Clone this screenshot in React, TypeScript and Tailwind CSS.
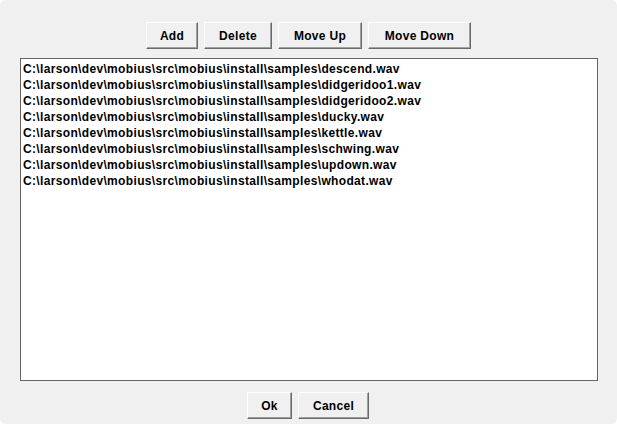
import React from "react";

const files = [
  "descend.wav",
  "didgeridoo1.wav",
  "didgeridoo2.wav",
  "ducky.wav",
  "kettle.wav",
  "schwing.wav",
  "updown.wav",
  "whodat.wav",
];

function Btn({ label, w }: { label: string; w: string }) {
  return (
    <button
      className={`${w} h-[27px] bg-[#f0f0f0] border border-t-white border-l-white border-r-[#696969] border-b-[#696969] shadow-[inset_-1px_-1px_0_#a0a0a0] text-[12px] tracking-[0.3px] font-bold text-black flex items-center justify-center leading-none shrink-0`}
    >
      {label}
    </button>
  );
}

export default function App() {
  return (
    <div className="w-[617px] h-[424px] bg-white">
      <div
        className="w-full h-full bg-[#f0f0f0] rounded-[6px] flex flex-col"
        style={{ fontFamily: '"Liberation Sans", Arial, sans-serif' }}
      >
        <div className="flex gap-[6px] pt-[22px] pl-[146px]">
          <Btn label="Add" w="w-[52px]" />
          <Btn label="Delete" w="w-[68px]" />
          <Btn label="Move Up" w="w-[84px]" />
          <Btn label="Move Down" w="w-[103px]" />
        </div>
        <div className="ml-[20px] mt-[9px] h-[323px] w-[578px] bg-white border border-[#646464] pt-[2px] pl-[2px]">
          {files.map((f) => (
            <div key={f} className="text-[12px] tracking-[0.34px] font-bold leading-[16px] text-black whitespace-nowrap">
              {"C:\\larson\\dev\\mobius\\src\\mobius\\install\\samples\\" + f}
            </div>
          ))}
        </div>
        <div className="flex gap-[6px] mt-[11px] pl-[247px]">
          <Btn label="Ok" w="w-[45px]" />
          <Btn label="Cancel" w="w-[71px]" />
        </div>
      </div>
    </div>
  );
}
